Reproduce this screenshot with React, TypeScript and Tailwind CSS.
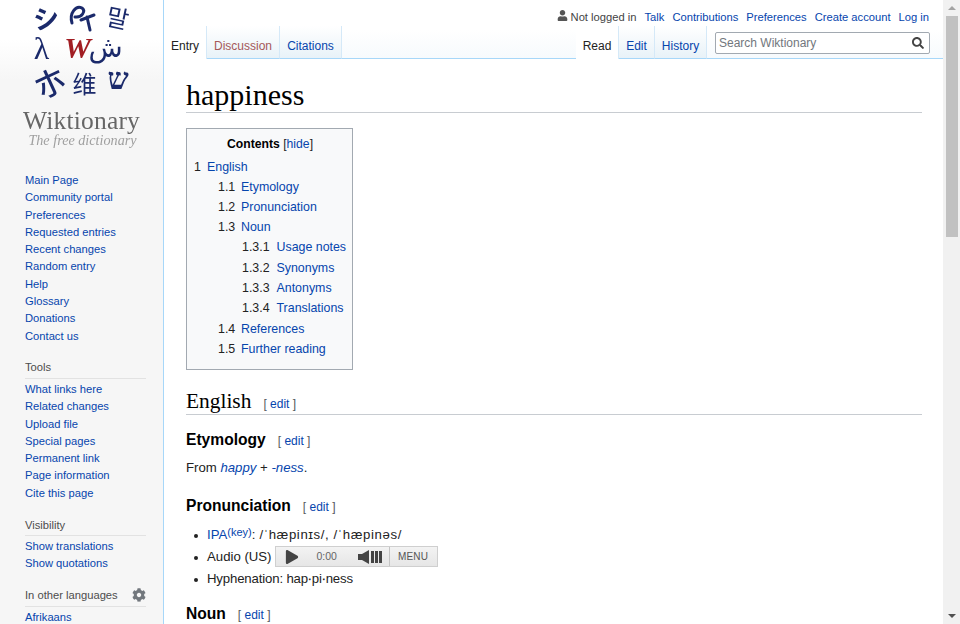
import React from "react";
import { FaUser, FaSearch, FaCog, FaPlay } from "react-icons/fa";

const link = "text-[#0645ad]";

function SideGroup({ title, items, icon, className }: { title?: string; items: string[]; icon?: boolean; className?: string }) {
  return (
    <div className={className}>
      {title && (
        <div className="ml-[25px] mr-[17px] h-[20px] border-b border-[#e2e2e2] flex items-center justify-between text-[11.2px] leading-[18px] text-[#4d4d4d] pb-[2px]">
          <span>{title}</span>
          {icon && <FaCog className="w-[14px] h-[14px] text-[#72777d]" />}
        </div>
      )}
      <ul className={title ? "ml-[25px] mt-[2px]" : "ml-[25px]"}>
        {items.map((t) => (
          <li key={t} className={`h-[17.3px] leading-[17.3px] text-[11.2px] whitespace-nowrap ${link}`}>{t}</li>
        ))}
      </ul>
    </div>
  );
}

function Logo() {
  const g = "flex items-center justify-center text-[#1b2a6b] leading-none";
  return (
    <div className="w-[164px] h-[164px] shrink-0 flex flex-col items-center pt-[2px]">
      <div className="grid grid-cols-3 w-[108px] h-[98px] ml-[-1px] blur-[0.3px] font-['Noto_Sans_CJK_JP','Noto_Sans',sans-serif]">
        <div className={`${g} text-[26px] font-bold rotate-[-8deg]`}>シ</div>
        <div className={g}>
          <svg viewBox="0 0 28 30" className="w-[28px] h-[30px]" fill="none" stroke="#1b2a6b" strokeWidth="3" strokeLinecap="round">
            <path d="M4 21C1 11 8 3 14 6c4 3 0 10-7 9" />
            <path d="M13 18l13-5M19 15l3 13" />
          </svg>
        </div>
        <div className={`${g} text-[24px] rotate-[12deg]`}>말</div>
        <div className={`${g} text-[32px] font-['Liberation_Serif',serif] pr-[8px]`}>λ</div>
        <div className={`${g} text-[30px] font-bold italic !text-[#a11d23] font-['Liberation_Serif',serif] pr-[8px]`}>W</div>
        <div className={`${g} text-[28px] font-['DejaVu_Sans',sans-serif] pr-[24px]`}>ش</div>
        <div className={`${g} text-[30px] font-medium rotate-[-25deg] pl-[8px]`}>朩</div>
        <div className={`${g} text-[24px] pl-[6px]`}>维</div>
        <div className={`${g} text-[30px] font-bold font-['Liberation_Serif',serif] pl-[1px] pb-[8px]`}>ש</div>
      </div>
      <div className="mt-[8px] ml-[-1px] text-[25.5px] leading-[26px] text-[#666666] font-['Liberation_Serif',serif] tracking-[0.2px] blur-[0.3px]">Wiktionary</div>
      <div className="ml-[1px] text-[14.2px] leading-[12px] italic text-[#a0a0a0] font-['Liberation_Serif',serif] blur-[0.3px]">The free dictionary</div>
    </div>
  );
}

function Sidebar() {
  return (
    <aside className="w-[164px] shrink-0 border-r border-[#a7d7f9] h-[624px] overflow-hidden bg-[linear-gradient(#ffffff_0px,#ffffff_40px,#f6f6f6_80px)]">
      <Logo />
      <SideGroup
        className="mt-[8px]"
        items={["Main Page","Community portal","Preferences","Requested entries","Recent changes","Random entry","Help","Glossary","Donations","Contact us"]}
      />
      <SideGroup
        className="mt-[14px]"
        title="Tools"
        items={["What links here","Related changes","Upload file","Special pages","Permanent link","Page information","Cite this page"]}
      />
      <SideGroup className="mt-[14px]" title="Visibility" items={["Show translations","Show quotations"]} />
      <SideGroup className="mt-[14px]" title="In other languages" icon items={["Afrikaans"]} />
    </aside>
  );
}

function Tab({ label, active, color, w }: { label: string; active?: boolean; color?: string; w: string }) {
  return (
    <div
      className={`${w} h-[33px] flex items-center justify-center pt-[7px] text-[12px] border-r border-[#d5e9f8] ${active ? "bg-white text-[#222222]" : "bg-[linear-gradient(#ffffff,#e8f2f8)] border-b border-b-[#a7d7f9]"} ${color ?? ""}`}
    >
      {label}
    </div>
  );
}

function Personal() {
  return (
    <div className="h-[26px] flex justify-end items-end gap-[8px] pr-[14px] pb-[1px] text-[11.2px] leading-[16px]">
      <span className="flex items-center text-[#444444]"><FaUser className="w-[11px] h-[11px] mr-[3px] mb-[3px] text-[#555555]" />Not logged in</span>
      {["Talk","Contributions","Preferences","Create account","Log in"].map((t) => (
        <span key={t} className={link}>{t}</span>
      ))}
    </div>
  );
}

function Tabs() {
  return (
    <div className="h-[33px] flex justify-between border-b border-[#a7d7f9] relative">
      <div className="flex">
        <Tab label="Entry" active w="w-[43px]" />
        <Tab label="Discussion" color="text-[#a55858]" w="w-[73px]" />
        <Tab label="Citations" color={link} w="w-[62px]" />
      </div>
      <div className="flex">
        <Tab label="Read" active w="w-[43px]" />
        <Tab label="Edit" color={link} w="w-[36px]" />
        <Tab label="History" color={link} w="w-[52px]" />
        <div className="ml-[8px] mr-[13px] mt-[6px] w-[215px] h-[22px] border border-[#a2a9b1] rounded-[2px] bg-white flex items-center justify-between px-[3px] text-[12px] text-[#72777d]">
          <span>Search Wiktionary</span>
          <FaSearch className="w-[12px] h-[12px] mr-[2px] text-[#444444]" />
        </div>
      </div>
    </div>
  );
}

function TocRow({ n, t, level }: { n: string; t: string; level: number }) {
  const pad = level === 0 ? "pl-[7px] h-[19.5px]" : level === 1 ? "pl-[31px] h-[20.3px]" : "pl-[55px] h-[20.3px]";
  const gap = level === 0 ? "w-[13px]" : level === 1 ? "w-[23px]" : "w-[34.5px]";
  return (
    <div className={`${pad} leading-[20.3px] flex whitespace-nowrap`}>
      <span className={`${gap} text-[#222222] shrink-0`}>{n}</span>
      <span className={link}>{t}</span>
    </div>
  );
}

function Toc() {
  const rows: [string, string, number][] = [
    ["1","English",0],["1.1","Etymology",1],["1.2","Pronunciation",1],["1.3","Noun",1],
    ["1.3.1","Usage notes",2],["1.3.2","Synonyms",2],["1.3.3","Antonyms",2],["1.3.4","Translations",2],
    ["1.4","References",1],["1.5","Further reading",1],
  ];
  return (
    <div className="w-[167px] h-[242px] mt-[15px] border border-[#a2a9b1] bg-[#f8f9fa] text-[12.4px] pt-[6px]">
      <div className="text-center text-[12.2px] leading-[18px] h-[22px] pl-[1px]">
        <b className="text-black">Contents</b> <span className="text-[#222222]">[<span className={link}>hide</span>]</span>
      </div>
      {rows.map((r) => <TocRow key={r[0]} n={r[0]} t={r[1]} level={r[2]} />)}
    </div>
  );
}

function Edit() {
  return <span className="ml-[12px] text-[12px] font-normal font-['Liberation_Sans',sans-serif] text-[#54595d]">[ <span className={link}>edit</span> ]</span>;
}

function Player() {
  return (
    <div className="ml-[3px] w-[163px] h-[21px] border border-[#cfcfcf] bg-[linear-gradient(#f3f3f3,#e6e6e6)] flex items-center text-[#444444]">
      <FaPlay className="ml-[9px] w-[14px] h-[14px] text-[#444444]" />
      <span className="ml-[18px] text-[10.5px] w-[21px] text-[#666666]">0:00</span>
      <div className="ml-[20px] flex items-center h-[14px] gap-[1px]">
        <svg viewBox="0 0 12 14" className="w-[12px] h-[14px]"><path d="M0 4h4l7-4v14l-7-4H0z" fill="#444444" /></svg>
        <span className="w-[3px] h-[12px] bg-[#444444]" />
        <span className="w-[3px] h-[12px] bg-[#444444]" />
        <span className="w-[3px] h-[12px] bg-[#444444]" />
      </div>
      <div className="ml-auto w-[48px] h-full border-l border-[#c4c4c4] flex items-center justify-center text-[10px] text-[#555555] tracking-[0.2px]">MENU</div>
    </div>
  );
}

const bullet = "absolute left-[8px] top-[10px] w-[4px] h-[4px] rounded-full bg-[#222222]";
const h3 = "h-[22px] text-[15.6px] leading-[22px] font-bold text-black";

function Content() {
  return (
    <main className="pl-[22px] pr-[21px] text-[13.2px] text-[#222222] bg-white h-[565px] overflow-hidden">
      <h1 className="mt-[15px] h-[39px] border-b border-[#c8ccd1] text-[30px] leading-[42px] text-black font-['Liberation_Serif',serif]">happiness</h1>
      <Toc />
      <h2 className="mt-[15px] h-[30px] border-b border-[#c8ccd1] text-[21.4px] leading-[33px] text-black font-['Liberation_Serif',serif]">
        English<Edit />
      </h2>
      <h3 className={`mt-[14px] ${h3}`}>Etymology<Edit /></h3>
      <p className="mt-[6px] h-[22px] leading-[22px]">From <i className={link}>happy</i> + <i className={link}>-ness</i>.</p>
      <h3 className={`mt-[16px] ${h3}`}>Pronunciation<Edit /></h3>
      <ul className="mt-[6.5px]">
        <li className="h-[22px] flex items-center pl-[21px] relative">
          <span className={bullet} />
          <span className={link}>IPA</span><sup className={`${link} text-[11px] relative top-[-3px] align-super`}>(key)</sup>: <span className="ml-[4px] tracking-[0.6px]">/ˈhæpinɪs/, /ˈhæpinəs/</span>
        </li>
        <li className="h-[22px] flex items-center pl-[21px] relative">
          <span className={bullet} />
          Audio (US)<Player />
        </li>
        <li className="h-[22px] flex items-center pl-[21px] relative tracking-[-0.15px]">
          <span className={bullet} />
          Hyphenation: hap‧pi‧ness
        </li>
      </ul>
      <h3 className={`mt-[13.5px] ${h3}`}>Noun<Edit /></h3>
    </main>
  );
}

function Scrollbar() {
  return (
    <div className="w-[17px] h-[624px] shrink-0 bg-[#f1f1f1] flex flex-col items-center">
      <div className="h-[16px] flex items-center justify-center">
        <div className="w-0 h-0 border-x-[4px] border-x-transparent border-b-[4px] border-b-[#a3a3a3]" />
      </div>
      <div className="w-[12px] h-[221px] bg-[#c1c1c1]" />
      <div className="mt-auto h-[16px] flex items-center justify-center">
        <div className="w-0 h-0 border-x-[4px] border-x-transparent border-t-[4px] border-t-[#505050]" />
      </div>
    </div>
  );
}

export default function App() {
  return (
    <div className="w-[960px] h-[624px] flex overflow-hidden bg-white font-['Liberation_Sans',Arial,sans-serif]">
      <div className="w-[943px] flex shrink-0">
        <Sidebar />
        <div className="flex-1 min-w-0 bg-[linear-gradient(#ffffff_30px,#f6fafd_59px)]">
          <Personal />
          <Tabs />
          <Content />
        </div>
      </div>
      <Scrollbar />
    </div>
  );
}
